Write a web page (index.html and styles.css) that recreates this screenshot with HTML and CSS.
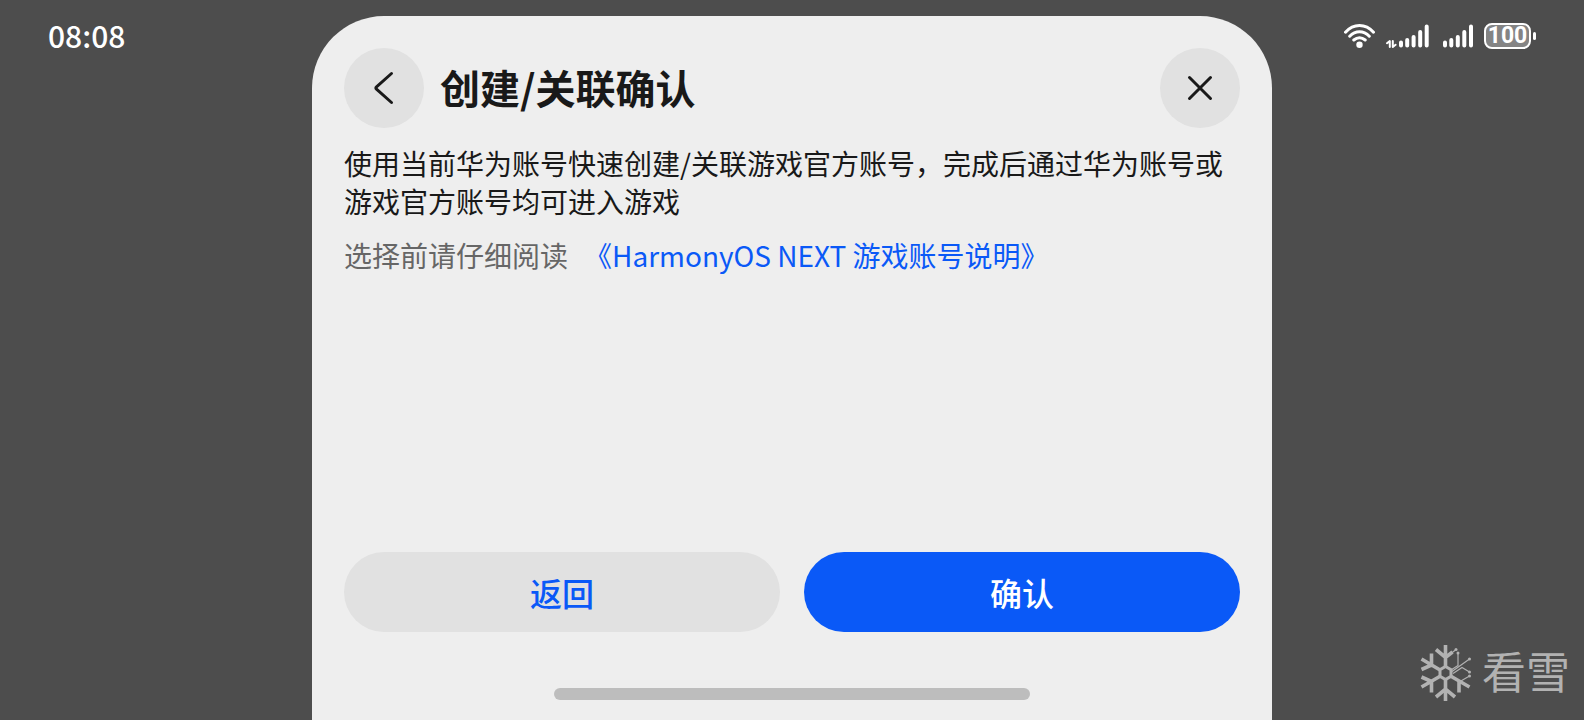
FILE: index.html
```html
<!DOCTYPE html>
<html lang="zh-CN">
<head>
<meta charset="utf-8">
<meta name="viewport" content="width=device-width, initial-scale=1">
<title>创建/关联确认</title>
<link rel="stylesheet" href="styles.css">
</head>
<body>
<div class="screen">
  <div class="status-start"><time class="clock">08:08</time></div>

  <main class="sheet">
    <header class="sheet-header">
      <button class="round-button" type="button" aria-label="返回上一页">
        <svg width="40" height="40" viewBox="0 0 40 40" fill="none" stroke="#191919" stroke-width="3" stroke-linecap="round" stroke-linejoin="round"><path d="M27.500 5.500 12.500 18.800Q11.200 20 12.500 21.200L27.500 34.500"/></svg>
      </button>
      <h1 class="title">创建/关联确认</h1>
      <button class="round-button" type="button" aria-label="关闭">
        <svg width="40" height="40" viewBox="0 0 40 40" fill="none" stroke="#191919" stroke-width="3" stroke-linecap="round"><path d="M9.500 9.500l21 21M30.500 9.500l-21 21"/></svg>
      </button>
    </header>
    <p class="lead">使用当前华为账号快速创建/关联游戏官方账号，完成后通过华为账号或游戏官方账号均可进入游戏</p>
    <p class="note"><span>选择前请仔细阅读</span><a class="link" href="#">《HarmonyOS NEXT 游戏账号说明》</a></p>
    <div class="actions">
      <button class="action" type="button">返回</button>
      <button class="action action-primary" type="button">确认</button>
    </div>
    <div class="home-bar"></div>
  </main>

  <div class="status-end">
    <svg width="32" height="26" viewBox="0 0 32 26" fill="none" stroke="#fff" stroke-width="3" stroke-linecap="round">
      <path d="M1.500 9.200Q7.500 2.500 15.500 2.500T29.500 9.200M5.700 13.200Q10 8.800 15.500 8.800T25.300 13.200M9.800 17Q12.500 14.700 15.500 14.700T21.200 17"/>
      <circle cx="15.500" cy="21.800" r="3.200" fill="#fff" stroke="none"/>
    </svg>
    <svg width="46" height="26" viewBox="0 0 46 26" fill="none" stroke="#fff" stroke-width="4" stroke-linecap="round">
      <path d="M15 22.500v-3M21.200 22.500v-5.500M27.600 22.500v-8.500M34.200 22.500v-13.500M40.700 22.500v-19"/>
      <path stroke-width="2" stroke-linejoin="round" d="M1 20.200l2.800-2.200v6M6.800 18v6l2.800-2.200"/>
    </svg>
    <svg width="32" height="26" viewBox="0 0 32 26" fill="none" stroke="#fff" stroke-width="4" stroke-linecap="round">
      <path d="M3 22.500v-3M9.300 22.500v-5.500M15.800 22.500v-8.500M22.300 22.500v-13.500M29 22.500v-19"/>
    </svg>
    <div class="battery"><span class="battery-level">100</span><span class="battery-tip"></span></div>
  </div>

  <div class="watermark">
    <svg width="54" height="60" viewBox="0 0 54 60" fill="none" stroke="#b2b2b2" stroke-width="3.600">
      <path stroke-width="3" d="M26.500 23.500l5.500 3.200v6.600l-5.500 3.200-5.500-3.200v-6.600z"/>
      <path d="M26.500 24V2M17 6.500l9.500 8 7-5.500M21.500 27.300 2.500 16M12.500 10.500V22L2.500 26.500M21.500 33 2.500 44M12.500 49.500V38.500L2.500 34M26.500 36V58M17 54l9.500-8 9.500 8M31.500 33 50.500 44M40 49.500V38"/>
      <g stroke-width="1.200">
        <path d="M32 27 39 22.500V10M33 28.500 50.500 16M34 30.500 43 24.500 50.500 29M30 12 36.500 7M41 38.500 50.500 33"/>
        <g fill="#b2b2b2" stroke="none"><circle cx="37" cy="6.500" r="1.500"/><circle cx="39" cy="10" r="1.500"/><circle cx="50.500" cy="16" r="1.500"/><circle cx="50.500" cy="29" r="1.500"/><circle cx="50.500" cy="33" r="1.500"/></g>
      </g>
    </svg>
    <span class="watermark-name">看雪</span>
  </div>
</div>
</body>
</html>
```
FILE: styles.css
```css
* { box-sizing: border-box; }

body {
  margin: 0;
  background: #4d4d4d;
  color: #191919;
  font-family: "Noto Sans CJK SC", sans-serif;
}

button { font: inherit; color: inherit; border: 0; padding: 0; cursor: pointer; }

.screen {
  position: relative;
  display: grid;
  grid-template-columns: 1fr minmax(0, 960px) 1fr;
  min-height: 100vh;
  padding-top: 16px;
}

.status-start, .status-end {
  display: flex;
  height: 40px;
  align-items: center;
  color: #fff;
}
.status-start { padding-left: 48px; align-items: flex-start; }
.status-end { justify-content: flex-end; gap: 10px; padding-right: 48px; }

.clock { font: 500 30px/38px "Noto Sans CJK SC", sans-serif; }

.battery { display: flex; align-items: center; gap: 2px; }
.battery-level {
  display: flex;
  align-items: center;
  justify-content: center;
  width: 47px;
  height: 26px;
  border: 2px solid #fff;
  border-radius: 8px;
  background: #848484;
  font: 700 23px/22px Roboto, sans-serif;
}
.battery-tip { width: 3px; height: 8px; border-radius: 2px; background: #fff; }

.sheet {
  display: flex;
  flex-direction: column;
  padding: 32px 32px 20px;
  border-radius: 72px 72px 0 0;
  background: #eee;
}

.sheet-header { display: flex; align-items: center; gap: 16px; }

.round-button {
  display: grid;
  place-items: center;
  width: 80px;
  height: 80px;
  border-radius: 50%;
  background: #e1e1e1;
}

.title { flex: 1; margin: 0; padding-bottom: 2px; font-size: 40px; line-height: 56px; font-weight: 700; }

.lead, .note { font-size: 28px; line-height: 38px; }
.lead { margin: 16px 0 0; }
.note { display: flex; flex-wrap: wrap; gap: 16px; margin: 16px 0 0; color: #666; }
.link { color: #0a59f7; text-decoration: none; }

.actions { display: flex; gap: 24px; margin-top: auto; }
.action {
  flex: 1;
  height: 80px;
  border-radius: 40px;
  background: #e1e1e1;
  color: #0a59f7;
  font-size: 32px;
  font-weight: 500;
}
.action-primary { background: #0a59f7; color: #fff; }

.home-bar {
  align-self: center;
  width: 476px;
  max-width: 60%;
  height: 12px;
  margin-top: 56px;
  border-radius: 6px;
  background: #bdbdbd;
}

.watermark {
  position: absolute;
  right: 14px;
  bottom: 17px;
  display: flex;
  align-items: flex-start;
  gap: 9px;
  color: #b2b2b2;
}
.watermark-name { font-size: 44px; line-height: 54px; }
```
